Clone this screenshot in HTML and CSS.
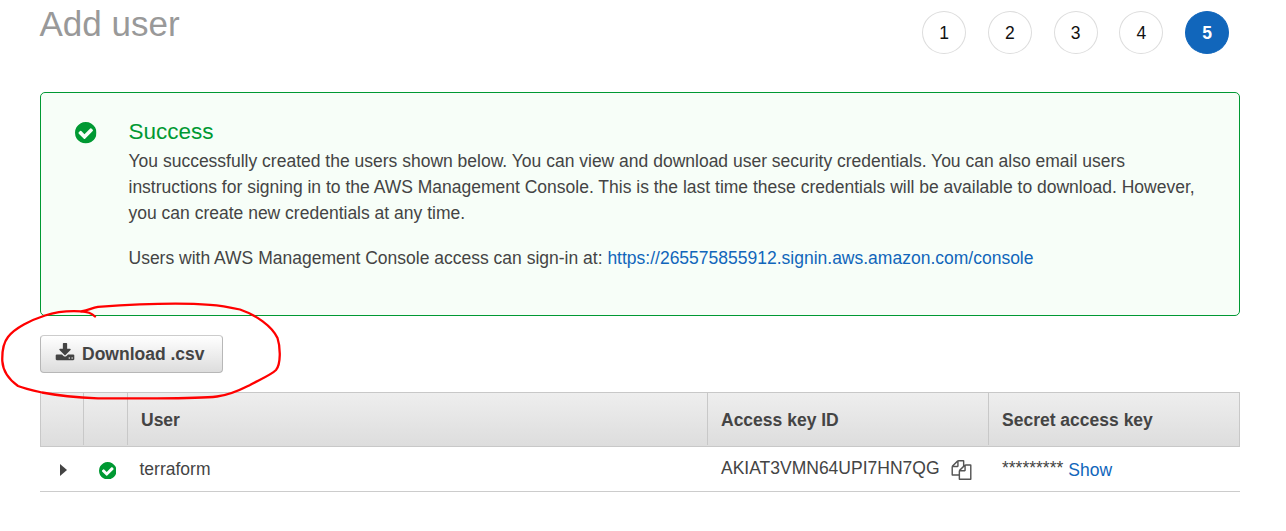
FILE: index.html
```html
<!DOCTYPE html>
<html lang="en">
<head>
<meta charset="utf-8">
<title>Add user</title>
<link rel="stylesheet" href="styles.css">
</head>
<body>
<svg class="defs" width="0" height="0">
  <symbol id="check" viewBox="128 128 1536 1536"><path d="M1412 734q0-28-18-46l-91-90q-19-19-45-19t-45 19l-408 407-226-226q-19-19-45-19t-45 19l-91 90q-18 18-18 46 0 27 18 45l362 362q19 19 45 19 27 0 46-19l543-543q18-18 18-45zm252 162q0 209-103 385.500t-279.500 279.500-385.500 103-385.500-103-279.500-279.500-103-385.500 103-385.500 279.500-279.500 385.500-103 385.500 103 279.500 279.500 103 385.500z"/></symbol>
</svg>
<main class="page">
  <header class="header">
    <h1 class="title">Add user</h1>
    <ol class="steps">
      <li class="step">1</li>
      <li class="step">2</li>
      <li class="step">3</li>
      <li class="step">4</li>
      <li class="step active">5</li>
    </ol>
  </header>

  <section class="alert">
    <svg class="alert-icon"><use href="#check"/></svg>
    <div class="alert-body">
      <h2 class="alert-title">Success</h2>
      <p class="alert-text">You successfully created the users shown below. You can view and download user security credentials. You can also email users instructions for signing in to the AWS Management Console. This is the last time these credentials will be available to download. However, you can create new credentials at any time.</p>
      <p class="alert-text">Users with AWS Management Console access can sign-in at: <a class="link" href="#">https://265575855912.signin.aws.amazon.com/console</a></p>
    </div>
  </section>

  <div class="toolbar">
    <button class="download" type="button">
      <svg class="download-icon" viewBox="0 0 1792 1792"><path d="M1344 1344q0-26-19-45t-45-19-45 19-19 45 19 45 45 19 45-19 19-45zm256 0q0-26-19-45t-45-19-45 19-19 45 19 45 45 19 45-19 19-45zm128-224v320q0 40-28 68t-68 28h-1472q-40 0-68-28t-28-68v-320q0-40 28-68t68-28h465l135 136q58 56 136 56t136-56l136-136h464q40 0 68 28t28 68zm-325-569q17 41-14 70l-448 448q-18 19-45 19t-45-19l-448-448q-31-29-14-70 17-39 59-39h256v-448q0-26 19-45t45-19h256q26 0 45 19t19 45v448h256q42 0 59 39z"/></svg>
      <span>Download .csv</span>
    </button>
  </div>

  <div class="table">
    <div class="row head">
      <div class="cell"></div>
      <div class="cell"></div>
      <div class="cell">User</div>
      <div class="cell">Access key ID</div>
      <div class="cell">Secret access key</div>
    </div>
    <div class="row data">
      <div class="cell icon-cell"><svg class="caret" viewBox="0 0 7 12"><path d="M0 0L7 6L0 12z"/></svg></div>
      <div class="cell icon-cell"><svg class="status"><use href="#check"/></svg></div>
      <div class="cell user">terraform</div>
      <div class="cell key"><span class="key-id">AKIAT3VMN64UPI7HN7QG</span>
        <svg class="copy" viewBox="0 0 1792 1792"><path d="M1696 384q40 0 68 28t28 68v1216q0 40-28 68t-68 28h-960q-40 0-68-28t-28-68v-288h-544q-40 0-68-28t-28-68v-672q0-40 20-88t48-76l408-408q28-28 76-48t88-20h416q40 0 68 28t28 68v328q68-40 128-40h416zm-544 213l-299 299h299v-299zm-640-384l-299 299h299v-299zm196 647l316-316v-416h-384v416q0 40-28 68t-68 28h-416v640h512v-256q0-40 20-88t48-76zm956 804v-1152h-384v416q0 40-28 68t-68 28h-416v640h896z"/></svg>
      </div>
      <div class="cell secret"><span class="mask">*********</span><a class="link" href="#">Show</a></div>
    </div>
  </div>
</main>
<svg class="marker" viewBox="0 290 300 120"><path d="M95 316.500C92 313.500 87 311.500 81 311.300C68 310.500 54 312.500 45 315.500C31 320 15 328 8 337C4 342 2 352 2.300 361C3 372 11 381 18 386C24 388.500 33 390.500 42 392.500C60 396 78 397.500 98 398.300H150C172 398.300 201 398.500 217 396.500C231 395 241 389.500 250 385C259 380 271 375 276 370C281 364 280.500 347 277.500 338C272 326 256 315 240 309.500C231 307.500 221 305.500 210 304.800C180 302.500 145 303.500 98 306.800C91 308 90 310 81 311.500"/></svg>
</body>
</html>
```
FILE: styles.css
```css
* { box-sizing: border-box; }

body {
  margin: 0;
  height: 531px;
  overflow: hidden;
  background: #fff;
  color: #444;
  font: 17.5px/26px "Liberation Sans", Arial, sans-serif;
}

h1, h2, p, ol { margin: 0; padding: 0; font-weight: normal; }
.defs { position: absolute; }
svg { display: block; flex: none; }
.link { color: #1166bb; text-decoration: none; }

.page { width: 1200px; margin-left: 40px; }

.header {
  display: flex;
  justify-content: space-between;
  height: 92px;
  padding: 0 11px 0 0;
}
.title { margin-left: -0.5px; padding-top: 4px; font-size: 35px; line-height: 40px; color: #999; }
.steps { display: flex; gap: 21.75px; padding-top: 11px; list-style: none; }
.step {
  width: 44px;
  height: 43px;
  border: 1px solid #ddd;
  border-radius: 50%;
  color: #111;
  line-height: 42px;
  text-align: center;
}
.step.active { border-color: #1166bb; background: #1166bb; color: #fff; font-weight: bold; }

.alert {
  display: flex;
  gap: 32px;
  height: 224px;
  padding: 25px 34px 0;
  border: 1px solid #093;
  border-radius: 5px;
  background: #f7fef8;
}
.alert-icon { width: 21.5px; height: 21.5px; margin-top: 4px; fill: #093; }
.alert-body { flex: 1; }
.alert-title { color: #093; font-size: 22.5px; line-height: 28px; padding-bottom: 2px; }
.alert-text + .alert-text { margin-top: 19px; }

.toolbar { height: 76px; padding-top: 19px; }
.download {
  display: flex;
  align-items: center;
  gap: 7.5px;
  width: 183px;
  height: 38px;
  padding: 0 0 0 13.5px;
  border: 1px solid #b7b7b7;
  border-top-color: #ccc;
  border-radius: 4px;
  background: linear-gradient(#fff, #ddd);
  color: #444;
  font: bold 17.5px/36px "Liberation Sans", Arial, sans-serif;
}
.download-icon { width: 20px; height: 20px; margin-bottom: 3px; fill: #444; }

.row { display: grid; grid-template-columns: 43px 44px 580px 281px 252px; }
.head {
  height: 55px;
  padding-bottom: 1px;
  border: solid #c8c8c8;
  border-width: 1px 1px 1px 0;
  background: linear-gradient(#eee, #ddd);
  font-weight: bold;
  line-height: 54px;
}
.head .cell { height: 52px; padding-left: 13px; border-left: 1px solid #c8c8c8; }
.head .cell:first-child { height: 53px; }
.data { height: 45px; border-bottom: 1px solid #ccc; line-height: 44px; }
.icon-cell { display: flex; align-items: center; }
.caret { width: 7px; height: 12px; margin: 1px 0 0 20px; fill: #444; }
.status { width: 17.5px; height: 17.5px; margin: 2px 0 0 15.5px; fill: #093; }
.user { padding-left: 12.5px; }
.key { display: flex; padding-left: 14px; }
.key-id { margin-top: -1px; }
.copy { width: 21px; height: 20px; margin: 13px 0 0 11px; fill: #555; }
.secret { display: flex; gap: 5px; padding-left: 14px; }
.mask { margin-top: -1px; }
.secret .link { padding-top: 1px; }

/* Freehand ring drawn over the download button */
.marker {
  position: absolute;
  left: 0;
  top: 290px;
  width: 300px;
  height: 120px;
  fill: none;
  stroke: #f00;
  stroke-width: 2.3;
  stroke-linecap: round;
  stroke-linejoin: round;
  pointer-events: none;
}
```
